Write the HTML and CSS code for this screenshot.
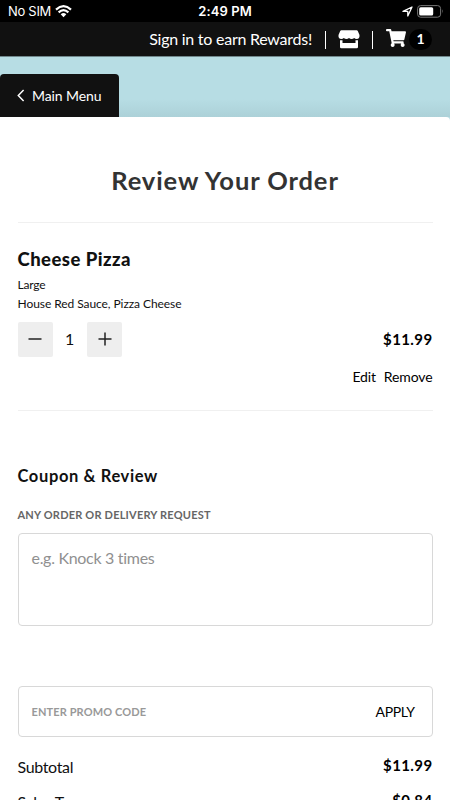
FILE: index.html
```html
<!DOCTYPE html>
<html lang="en">
<head>
<meta charset="utf-8">
<meta name="viewport" content="width=device-width, initial-scale=1">
<title>Review Your Order</title>
<link rel="stylesheet" href="styles.css">
</head>
<body>
<div class="status">
  <div class="carrier"><span>No SIM</span>
    <svg width="17" height="13" viewBox="0 0 17 13" fill="none" stroke="#fff" stroke-width="2.2"><path d="M1 4.6Q8.5-2.2 16 4.6M3.6 7.4Q8.500 3 13.400 7.400"/><path d="M5.700 9.200Q8.500 6.900 11.300 9.200L8.500 12.200Z" fill="#fff" stroke="none"/></svg>
  </div>
  <span class="clock">2:49 PM</span>
  <div class="device">
    <svg width="11" height="11" viewBox="0 0 11 11" fill="none" stroke="#fff" stroke-width="1.300" stroke-linejoin="round"><path d="M1 5.400L10 1 5.800 10V5.400Z"/></svg>
    <svg width="27" height="13" viewBox="0 0 27 13"><rect x=".6" y=".6" width="23" height="11.600" rx="3" fill="none" stroke="#777"/><rect x="2.200" y="2.200" width="14" height="8.400" rx="1.500" fill="#fff"/><path d="M25 4.200Q26.700 6.400 25 8.600Z" fill="#777"/></svg>
  </div>
</div>
<header class="bar">
  <span class="signin">Sign in to earn Rewards!</span>
  <i class="sep"></i>
  <svg class="store" width="22" height="19" viewBox="0 0 22 19" fill="#fff"><path d="M3.300.2H18.700Q19.400.2 19.800.9L21.500 5.100Q21.900 9 18.600 9.100 17.200 9.100 16.200 8 15 9.100 13.600 9.100 12.100 9.100 11 8 9.900 9.100 8.400 9.100 7 9.100 5.800 8 4.800 9.100 3.400 9.100.1 9 .5 5.100L2.200.9Q2.600.2 3.300.2Z"/><path d="M2 10.300H4.500V13H17.500V10.300H20V17Q20 18.300 18.700 18.300H3.300Q2 18.300 2 17Z"/></svg>
  <i class="sep"></i>
  <svg class="cart" width="20" height="18" viewBox="0 0 576 512" fill="#fff"><path d="M528.120 301.319l47.273-208C578.806 78.301 567.391 64 551.990 64H159.208l-9.166-44.810C147.758 8.021 137.930 0 126.529 0H24C10.745 0 0 10.745 0 24v16c0 13.255 10.745 24 24 24h69.883l70.248 343.435C147.325 417.100 136 435.222 136 456c0 30.928 25.072 56 56 56s56-25.072 56-56c0-15.674-6.447-29.835-16.824-40h209.647C430.447 426.165 424 440.326 424 456c0 30.928 25.072 56 56 56s56-25.072 56-56c0-22.172-12.888-41.332-31.579-50.405l5.517-24.276c3.413-15.018-8.002-29.319-23.403-29.319H218.117l-6.545-32h293.145c11.206 0 20.920-7.754 23.403-18.681z"/></svg>
  <span class="count">1</span>
</header>
<div class="hero">
  <a class="tab"><svg width="8" height="13" viewBox="0 0 8 13" fill="none" stroke="#fff" stroke-width="1.500"><path d="M6.600 1L1.300 6.500 6.600 12"/></svg><span>Main Menu</span></a>
</div>
<main class="card">
  <h1>Review Your Order</h1>
  <section class="item">
    <h2>Cheese Pizza</h2>
    <p class="size">Large</p>
    <p class="toppings">House Red Sauce, Pizza Cheese</p>
    <div class="row">
      <div class="stepper">
        <button aria-label="Less"><svg width="14" height="14" viewBox="0 0 14 14" stroke="#222" stroke-width="1.500"><path d="M.5 7H13.500"/></svg></button>
        <span>1</span>
        <button aria-label="More"><svg width="14" height="14" viewBox="0 0 14 14" stroke="#222" stroke-width="1.500"><path d="M.5 7H13.500M7 .5V13.500"/></svg></button>
      </div>
      <b class="price">$11.99</b>
    </div>
    <div class="actions"><a class="edit">Edit</a><a class="remove">Remove</a></div>
  </section>
  <h3>Coupon &amp; Review</h3>
  <label class="label">ANY ORDER OR DELIVERY REQUEST</label>
  <div class="note">e.g. Knock 3 times</div>
  <div class="promo"><span class="code">ENTER PROMO CODE</span><span class="apply">APPLY</span></div>
  <div class="total"><span>Subtotal</span><b class="price">$11.99</b></div>
  <div class="total"><span>Sales Tax</span><b class="price">$0.84</b></div>
</main>
</body>
</html>
```

FILE: styles.css
```css
* { box-sizing: border-box; }
html, body { height: 100%; }
body {
  margin: 0;
  overflow: hidden;
  background: #b7dde4;
  color: #111;
  font-family: Lato, "Liberation Sans", sans-serif;
  font-variant-ligatures: none;
  display: flex;
  flex-direction: column;
  white-space: nowrap;
}
svg { display: block; flex: none; }
h1, h2, h3, p { margin: 0; }

.status {
  flex: none;
  height: 22px;
  padding: 0 6px 0 8px;
  background: #000;
  color: #fff;
  display: grid;
  grid-template-columns: 1fr auto 1fr;
  align-items: center;
  font: 13px/22px Inter, sans-serif;
}
.carrier { display: flex; align-items: center; gap: 5px; letter-spacing: -.3px; }
.carrier svg { margin-left: -1px; }
.clock { margin-left: -2px; font-weight: 600; letter-spacing: .1px; }
.device { display: flex; align-items: center; justify-content: flex-end; gap: 4px; }

.bar {
  flex: none;
  height: 35px;
  padding-right: 18px;
  background: #111;
  border-bottom: 1px solid #71888c;
  color: #fff;
  display: flex;
  align-items: center;
  justify-content: flex-end;
}
.signin { font-size: 16px; line-height: 34px; letter-spacing: -.25px; }
.sep { width: 1px; height: 18px; margin-top: 2px; background: #fff; }
.signin + .sep { margin-left: 13px; }
.store { margin: 0 12px; }
.cart { margin: 0 3px 2px 13px; }
.count {
  width: 23px;
  height: 21px;
  border-radius: 11px;
  background: #000;
  font-size: 14px;
  font-weight: 700;
  line-height: 20px;
  text-align: center;
}

.hero {
  flex: none;
  height: 60px;
  padding-top: 17px;
  background: linear-gradient(#b7dde4 70%, #acd1d8);
}
.tab {
  width: 119px;
  height: 43px;
  padding-left: 17px;
  border-radius: 4px 4px 0 0;
  background: #111;
  color: #fff;
  display: flex;
  align-items: center;
  gap: 7px;
  font-size: 14px;
  letter-spacing: -.1px;
}

.card {
  flex: 1;
  padding: 43px 17.5px 0;
  border-top-right-radius: 4px;
  background: #fff;
}
h1 {
  height: 62px;
  font-size: 25.5px;
  line-height: 40px;
  letter-spacing: .9px;
  text-align: center;
  color: #333;
}
.item {
  height: 189px;
  padding-top: 25px;
  border-top: 1px solid #f0f0f0;
  border-bottom: 1px solid #f0f0f0;
}
h2 { font-size: 18.5px; font-weight: 900; line-height: 22px; letter-spacing: .45px; }
.size, .toppings { font-size: 12px; line-height: 19px; letter-spacing: -.07px; }
.size { margin-top: 5px; letter-spacing: -.2px; }
.row { margin-top: 8.5px; display: flex; align-items: center; justify-content: space-between; }
.stepper { display: flex; align-items: center; }
.stepper button {
  width: 35px;
  height: 35px;
  padding: 0;
  border: 0;
  border-radius: 2px;
  background: #eee;
  display: grid;
  place-items: center;
}
.stepper span { width: 34.5px; margin-top: -2px; text-align: center; font-size: 16px; }
.price { font-size: 15px; letter-spacing: .4px; color: #000; }
.actions { margin-top: 10.5px; display: flex; justify-content: flex-end; gap: 8px; font-size: 14px; line-height: 20px; color: #000; }
.edit { letter-spacing: -.2px; }
.remove { letter-spacing: -.1px; }
h3 { margin-top: 52px; font-size: 16.5px; line-height: 26px; letter-spacing: .62px; }
.label { display: block; margin-top: 15.5px; font-size: 11px; font-weight: 700; line-height: 20px; letter-spacing: .2px; color: #666; }
.note {
  height: 93.5px;
  margin-top: 8px;
  padding: 12px 13px;
  border: 1px solid #d8d8d8;
  border-radius: 4px;
  color: #909090;
  font-size: 16px;
  line-height: 24px;
  letter-spacing: -.3px;
}
.promo {
  height: 51px;
  margin-top: 60px;
  padding: 0 17px 1px 13px;
  border: 1px solid #d8d8d8;
  border-radius: 4px;
  display: flex;
  align-items: center;
  justify-content: space-between;
}
.code { color: #999; font-size: 11px; font-weight: 700; letter-spacing: .12px; }
.apply { font-size: 14px; letter-spacing: -.4px; color: #000; }
.total { height: 35px; display: flex; justify-content: space-between; font-size: 16px; line-height: 35px; letter-spacing: -.35px; }
.promo + .total { margin-top: 12px; }
.total .price { line-height: 33px; }
```
